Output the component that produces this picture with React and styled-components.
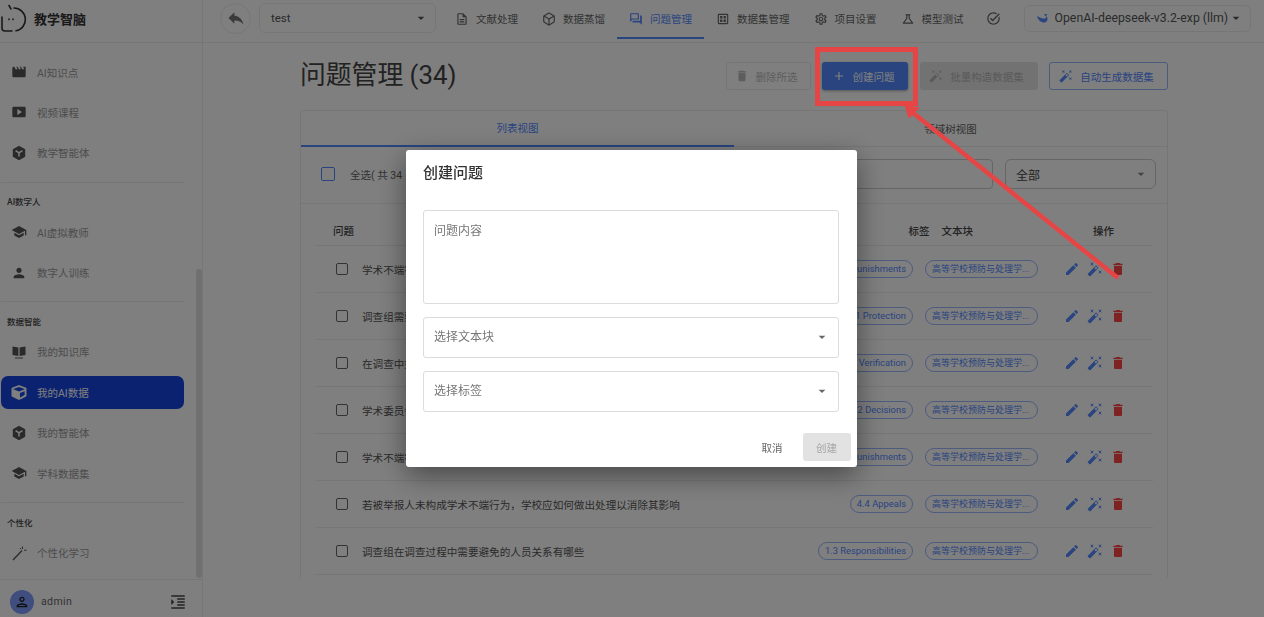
import React from 'react';
import styled, { createGlobalStyle } from 'styled-components';
import {
  MdMovie, MdSmartDisplay, MdSchool, MdPerson, MdEdit, MdDelete, MdAutoFixHigh, MdAdd, MdReply,
  MdArrowDropDown, MdFormatIndentIncrease, MdOutlineDescription, MdOutlineQuestionAnswer,
  MdOutlineDataset, MdOutlineSettings, MdOutlineScience, MdOutlineTaskAlt, MdOutlinePerson,
} from 'react-icons/md';
import { FaCube } from 'react-icons/fa';
import { Box } from 'lucide-react';

const BLUE = '#5288ff';
const LINE = '#ededed';

const GlobalStyle = createGlobalStyle`
  html, body { margin: 0; height: 100%; overflow: hidden; background: #fff; }
  body { font-family: Roboto, "Noto Sans CJK SC", sans-serif; color: #444; }
  * { box-sizing: border-box; }
`;

const Page = styled.div`
  display: flex;
  width: 1264px;
  height: 617px;
`;

/* 侧边栏 */
const Sidebar = styled.aside`
  position: relative;
  display: flex;
  flex-direction: column;
  flex: 0 0 203px;
  border-right: 1px solid ${LINE};
`;
const Brand = styled.div`
  display: flex;
  align-items: center;
  gap: 7px;
  height: 43px;
  padding: 0 0 6px 1px;
  border-bottom: 1px solid ${LINE};
  font-size: 13px;
  font-weight: 700;
  color: #333;
`;
const Menu = styled.nav`
  flex: 1;
  padding: 12.5px 0 0 1px;
  overflow: hidden;
`;
const MenuItem = styled.div`
  display: flex;
  align-items: center;
  gap: 10px;
  width: 183px;
  height: 33px;
  margin-bottom: 7.4px;
  padding-left: 10px;
  border-radius: 7px;
  font-size: 10.5px;
  color: ${(p) => (p.$active ? '#fff' : '#999')};
  background: ${(p) => (p.$active ? '#1644e0' : 'transparent')};
  svg { flex: 0 0 16px; color: ${(p) => (p.$active ? '#fff' : '#555')}; }
`;
const Divider = styled.div`
  width: 183px;
  height: 1px;
  margin-top: 12.4px;
  background: ${LINE};
`;
const SectionLabel = styled.div`
  padding: 12.5px 0 6.5px 6px;
  font-size: 8.5px;
  line-height: 14px;
  font-weight: 500;
  color: #444;
`;
const ScrollThumb = styled.div`
  position: absolute;
  top: 269px;
  right: 0;
  width: 6px;
  height: 309px;
  border-radius: 3px;
  background: #e0e0e0;
`;
const UserBar = styled.div`
  display: flex;
  align-items: center;
  gap: 7px;
  height: 38px;
  padding: 6px 15px 0 10px;
  border-top: 1px solid ${LINE};
  font-size: 10.5px;
  letter-spacing: 0.4px;
  color: #666;
`;
const Avatar = styled.div`
  display: grid;
  place-items: center;
  width: 24px;
  height: 24px;
  border-radius: 50%;
  background: #7f9bff;
  color: #222;
`;
const Collapse = styled(MdFormatIndentIncrease)`
  margin-left: auto;
  color: #444;
`;

/* 顶部栏 */
const Main = styled.main`
  display: flex;
  flex-direction: column;
  flex: 1;
  min-width: 0;
`;
const TopBar = styled.header`
  display: flex;
  align-items: center;
  height: 43px;
  padding: 0 0 6px 17px;
  border-bottom: 1px solid ${LINE};
`;
const BackButton = styled.div`
  display: grid;
  place-items: center;
  flex: 0 0 31px;
  height: 31px;
  margin-right: 8px;
  border: 1px solid ${LINE};
  border-radius: 50%;
  color: #777;
`;
const TopSelect = styled.div`
  display: flex;
  align-items: center;
  justify-content: space-between;
  flex: 0 0 ${(p) => p.$width}px;
  height: ${(p) => p.$height}px;
  padding: 0 6px 0 11px;
  border: 1px solid ${LINE};
  border-radius: 6px;
  font-size: ${(p) => p.$font}px;
  white-space: nowrap;
  color: #555;
`;
const NavTabs = styled.div`
  display: flex;
  flex: 0 0 auto;
  height: 36.5px;
  margin: 6px 0 0 7px;
`;
const NavTab = styled.div`
  display: flex;
  align-items: center;
  gap: 7px;
  height: 100%;
  padding: 0 12px 3px;
  font-size: 10.5px;
  white-space: nowrap;
  color: ${(p) => (p.$active ? BLUE : '#666')};
  border-bottom: 2px solid ${(p) => (p.$active ? BLUE : 'transparent')};
  svg { flex: 0 0 auto; }
`;
const CheckIcon = styled(MdOutlineTaskAlt)`
  flex: 0 0 auto;
  margin: 0 23px 0 10px;
  color: #666;
`;
const ModelName = styled.span`
  display: flex;
  align-items: center;
  gap: 7px;
`;

/* 内容区 */
const Content = styled.div`
  flex: 1;
  padding: 19px 96px 0 97px;
`;
const Heading = styled.div`
  display: flex;
  align-items: center;
  height: 28px;
  margin-bottom: 20px;
`;
const Title = styled.h1`
  flex: 1;
  margin: 0;
  padding-bottom: 2px;
  font-size: 25.8px;
  line-height: 28px;
  font-weight: 400;
  color: #444;
`;
const Actions = styled.div`
  display: flex;
  gap: 11.5px;
`;
const ActionButton = styled.div`
  display: flex;
  align-items: center;
  justify-content: center;
  gap: 7px;
  width: ${(p) => p.$width}px;
  height: 28px;
  padding-right: 4px;
  border-radius: 3px;
  font-size: 10.5px;
  ${(p) => p.$kind === 'contained' && `background: ${BLUE}; color: #fff; box-shadow: 0 1px 3px rgba(0,0,0,.35);`}
  ${(p) => p.$kind === 'disabled' && 'background: #e4e4e4; color: #b4b4b4;'}
  ${(p) => p.$kind === 'ghost' && `border: 1px solid ${LINE}; color: #bbb;`}
  ${(p) => p.$kind === 'outlined' && `border: 1px solid #9ab6ff; color: ${BLUE};`}
`;
const Card = styled.section`
  height: 468px;
  border: 1px solid ${LINE};
  border-bottom: 0;
  border-radius: 3px 3px 0 0;
`;
const Tabs = styled.div`
  display: grid;
  grid-template-columns: 433px 1fr;
  height: 36px;
  border-bottom: 1px solid ${LINE};
`;
const Tab = styled.div`
  display: grid;
  place-items: center;
  padding-bottom: 1px;
  margin-bottom: -1px;
  font-size: 10.5px;
  color: ${(p) => (p.$active ? BLUE : '#666')};
  border-bottom: ${(p) => (p.$active ? `2px solid ${BLUE}` : '0')};
`;
const Filters = styled.div`
  display: flex;
  align-items: center;
  height: 57px;
  padding: 0 11px 2px 20px;
  border-bottom: 1px solid ${LINE};
`;
const CheckBox = styled.span`
  flex: 0 0 auto;
  width: ${(p) => (p.$primary ? 14 : 11.5)}px;
  height: ${(p) => (p.$primary ? 14 : 11.5)}px;
  border: 1.5px solid ${(p) => (p.$primary ? BLUE : '#666')};
  border-radius: 2px;
`;
const SelectAll = styled.span`
  flex: 0 0 56px;
  margin: 0 12px 0 15px;
  font-size: 10.5px;
  color: #666;
  white-space: nowrap;
`;
const SearchBox = styled.div`
  flex: 1;
  height: 30px;
  border: 1px solid #ccc;
  border-radius: 4px;
`;
const FilterSelect = styled.div`
  display: flex;
  align-items: center;
  justify-content: space-between;
  width: 151px;
  height: 30px;
  margin-left: 12px;
  padding: 0 6px 0 10px;
  border: 1px solid #ccc;
  border-radius: 6px;
  font-size: 12px;
  color: #444;
  svg { color: #888; }
`;
const Table = styled.div`
  margin: 0 14px;
`;
const HeadRow = styled.div`
  display: flex;
  align-items: center;
  height: 42px;
  padding: 12px 39px 0 18px;
  border-bottom: 1px solid ${LINE};
  font-size: 10.5px;
  font-weight: 500;
  color: #444;
`;
const HeadQuestion = styled.span`
  flex: 1;
`;
const HeadOps = styled.span`
  margin-left: 120px;
`;
const HeadGap = styled.span`
  margin-left: 12px;
`;
const Row = styled.div`
  display: flex;
  align-items: center;
  height: 47px;
  padding: 0 27px 0 21px;
  border-bottom: 1px solid ${LINE};
`;
const Question = styled.span`
  flex: 1;
  min-width: 0;
  margin-left: 14.5px;
  font-size: 10.6px;
  color: #555;
  white-space: nowrap;
  overflow: hidden;
`;
const Chip = styled.span`
  flex: 0 0 auto;
  height: 18.5px;
  padding: 0 6px;
  border: 1px solid #9ab6ff;
  border-radius: 9.5px;
  font-size: 9.4px;
  line-height: 16.5px;
  color: ${BLUE};
  white-space: nowrap;
  overflow: hidden;
`;
const DocChip = styled(Chip)`
  width: 113px;
  margin-left: 12px;
  font-size: 9px;
`;
const RowIcons = styled.div`
  display: flex;
  gap: 7px;
  margin-left: 26px;
`;
const EditIcon = styled(MdEdit)`color: ${BLUE};`;
const WandIcon = styled(MdAutoFixHigh)`color: ${BLUE};`;
const TrashIcon = styled(MdDelete)`color: #ff4444;`;

/* 弹窗 */
const Backdrop = styled.div`
  position: fixed;
  inset: 0;
  display: flex;
  align-items: flex-start;
  justify-content: center;
  padding: 150px 2px 0 0;
  background: rgba(0, 0, 0, 0.5);
`;
const Dialog = styled.div`
  display: flex;
  flex-direction: column;
  width: 451px;
  height: 317px;
  padding: 0 6px 6px 17.5px;
  border-radius: 3px;
  background: #fff;
  box-shadow: 0 8px 28px rgba(0, 0, 0, 0.45);
`;
const DialogTitle = styled.h2`
  height: 60px;
  margin: 0;
  padding-top: 12px;
  font-size: 15px;
  line-height: 23px;
  font-weight: 500;
  color: #333;
`;
const Field = styled.div`
  display: flex;
  align-items: ${(p) => (p.$multi ? 'flex-start' : 'center')};
  justify-content: space-between;
  width: 416px;
  height: ${(p) => (p.$multi ? 94 : 41.5)}px;
  margin-bottom: 12.5px;
  padding: ${(p) => (p.$multi ? '11px 10px' : '0 8px 0 10px')};
  border: 1px solid #dcdcdc;
  border-radius: 3px;
  font-size: 12px;
  line-height: 18px;
  color: #777;
  svg { color: #666; }
`;
const DialogFooter = styled.div`
  display: flex;
  align-items: center;
  justify-content: flex-end;
  gap: 20px;
  margin-top: auto;
  font-size: 10.5px;
`;
const CancelText = styled.span`
  color: #666;
`;
const SubmitButton = styled.div`
  display: grid;
  place-items: center;
  width: 48px;
  height: 28px;
  border-radius: 3px;
  background: #e2e2e2;
  color: #a6a6a6;
`;
const Annotation = styled.svg`
  position: fixed;
  inset: 0;
  pointer-events: none;
`;

const Logo = () => (
  <svg width="26" height="28" viewBox="0 0 26 28" fill="none" stroke="#333" strokeWidth="1.6" strokeLinecap="round">
    <path d="M8 1.5 L10 5" />
    <path d="M13 4 A11.5 11.5 0 0 1 15 26.8" />
    <path d="M11 27 L4 27 Q1 27 1 24 L1 13" />
    <path d="M8 15v.6M12 15v.6" />
  </svg>
);

const BookIcon = () => (
  <svg width="16" height="16" viewBox="0 0 16 16" fill="currentColor">
    <path d="M1.5 2.5 L7.4 3.5 V12 L1.5 11 Z M8.6 3.5 L14.5 2.5 V11 L8.6 12 Z" />
    <path d="M4 13.5h8v1H4z" />
  </svg>
);

const HexIcon = () => (
  <svg width="16" height="16" viewBox="0 0 16 16">
    <path d="M8 .8 L14.2 4.3 V11.7 L8 15.2 L1.8 11.7 V4.3 Z" fill="currentColor" />
    <path d="M4.6 5.6 L8 7.8 L11.4 5.6 M8 7.8 V11.6" fill="none" stroke="#fff" strokeWidth="1.5" />
  </svg>
);

const WandLine = () => (
  <svg width="16" height="16" viewBox="0 0 16 16" fill="none" stroke="currentColor">
    <path d="M2 15 L11 5.5" strokeWidth="1.3" />
    <path d="M11.5 1.5 V4 M13 5.2 H15.5 M9 3 L10.2 4.2" strokeWidth="1" />
  </svg>
);

const WhaleIcon = () => (
  <svg width="12" height="11" viewBox="0 0 12 11" fill={BLUE}>
    <path d="M1 3 C2 7 5 9.5 8 9.5 C10 9.5 11.5 8 11.5 6 C11.5 4.5 11 3.5 10.5 3 C10.5 5 9 6 7 5.5 C4.5 5 3 4 1 3 Z" />
    <path d="M8 1 L11.5 1.2 L9.5 3.4 Z" />
  </svg>
);

const section1 = [
  ['AI知识点', <MdMovie size={16} />],
  ['视频课程', <MdSmartDisplay size={16} />],
  ['教学智能体', <HexIcon />],
];
const section2 = [
  ['AI虚拟教师', <MdSchool size={16} />],
  ['数字人训练', <MdPerson size={18} />],
];
const section3 = [
  ['我的知识库', <BookIcon />],
  ['我的AI数据', <FaCube size={15} />, true],
  ['我的智能体', <HexIcon />],
  ['学科数据集', <MdSchool size={18} />],
];

const navTabs = [
  ['文献处理', <MdOutlineDescription size={14} />],
  ['数据蒸馏', <Box size={14} />],
  ['问题管理', <MdOutlineQuestionAnswer size={14} />, true],
  ['数据集管理', <MdOutlineDataset size={14} />],
  ['项目设置', <MdOutlineSettings size={14} />],
  ['模型测试', <MdOutlineScience size={14} />],
];

const rows = [
  ['学术不端行为的处理结果有哪些类型', '4.3 Punishments'],
  ['调查组需要对举报人采取哪些保护措施', '3.1 Protection'],
  ['在调查中如何对相关证据进行核实', '3.2 Verification'],
  ['学术委员会如何作出最终认定结论', '4.2 Decisions'],
  ['学术不端行为的处分应当如何执行', '4.3 Punishments'],
  ['若被举报人未构成学术不端行为，学校应如何做出处理以消除其影响', '4.4 Appeals'],
  ['调查组在调查过程中需要避免的人员关系有哪些', '1.3 Responsibilities'],
];

const MenuList = ({ items }) =>
  items.map(([label, icon, active]) => (
    <MenuItem key={label} $active={active}>
      {icon}
      {label}
    </MenuItem>
  ));

const App = () => (
  <Page>
    <GlobalStyle />
    <Sidebar>
      <Brand>
        <Logo />
        教学智脑
      </Brand>
      <Menu>
        <MenuList items={section1} />
        <Divider />
        <SectionLabel>AI数字人</SectionLabel>
        <MenuList items={section2} />
        <Divider />
        <SectionLabel>数据智能</SectionLabel>
        <MenuList items={section3} />
        <Divider />
        <SectionLabel>个性化</SectionLabel>
        <MenuItem>
          <WandLine />
          个性化学习
        </MenuItem>
      </Menu>
      <ScrollThumb />
      <UserBar>
        <Avatar>
          <MdOutlinePerson size={16} />
        </Avatar>
        admin
        <Collapse size={18} />
      </UserBar>
    </Sidebar>

    <Main>
      <TopBar>
        <BackButton>
          <MdReply size={20} />
        </BackButton>
        <TopSelect $width={177} $height={30} $font={11.5}>
          test
          <MdArrowDropDown size={16} />
        </TopSelect>
        <NavTabs>
          {navTabs.map(([label, icon, active]) => (
            <NavTab key={label} $active={active}>
              {icon}
              {label}
            </NavTab>
          ))}
        </NavTabs>
        <CheckIcon size={15} />
        <TopSelect $width={227} $height={27} $font={12.3}>
          <ModelName>
            <WhaleIcon />
            OpenAI-deepseek-v3.2-exp (llm)
          </ModelName>
          <MdArrowDropDown size={16} />
        </TopSelect>
      </TopBar>

      <Content>
        <Heading>
          <Title>问题管理 (34)</Title>
          <Actions>
            <ActionButton $kind="ghost" $width={85}>
              <MdDelete size={14} />
              删除所选
            </ActionButton>
            <ActionButton $kind="contained" $width={86}>
              <MdAdd size={14} />
              创建问题
            </ActionButton>
            <ActionButton $kind="disabled" $width={118}>
              <MdAutoFixHigh size={14} />
              批量构造数据集
            </ActionButton>
            <ActionButton $kind="outlined" $width={119}>
              <MdAutoFixHigh size={14} />
              自动生成数据集
            </ActionButton>
          </Actions>
        </Heading>
        <Card>
          <Tabs>
            <Tab $active>列表视图</Tab>
            <Tab>领域树视图</Tab>
          </Tabs>
          <Filters>
            <CheckBox $primary />
            <SelectAll>全选( 共 34</SelectAll>
            <SearchBox />
            <FilterSelect>
              全部
              <MdArrowDropDown size={16} />
            </FilterSelect>
          </Filters>
          <Table>
            <HeadRow>
              <HeadQuestion>问题</HeadQuestion>
              <span>标签</span>
              <HeadGap>文本块</HeadGap>
              <HeadOps>操作</HeadOps>
            </HeadRow>
            {rows.map(([text, tag]) => (
              <Row key={text + tag}>
                <CheckBox />
                <Question>{text}</Question>
                <Chip>{tag}</Chip>
                <DocChip>高等学校预防与处理学...</DocChip>
                <RowIcons>
                  <EditIcon size={16} />
                  <WandIcon size={16} />
                  <TrashIcon size={16} />
                </RowIcons>
              </Row>
            ))}
          </Table>
        </Card>
      </Content>
    </Main>

    <Backdrop>
      <Dialog>
        <DialogTitle>创建问题</DialogTitle>
        <Field $multi>问题内容</Field>
        <Field>
          选择文本块
          <MdArrowDropDown size={16} />
        </Field>
        <Field>
          选择标签
          <MdArrowDropDown size={16} />
        </Field>
        <DialogFooter>
          <CancelText>取消</CancelText>
          <SubmitButton>创建</SubmitButton>
        </DialogFooter>
      </Dialog>
    </Backdrop>

    <Annotation width="1264" height="617" viewBox="0 0 1264 617" fill="none" stroke="#e64545">
      <rect x="817.5" y="49.5" width="98" height="54" strokeWidth="5" />
      <path d="M1118 278 L912 112" strokeWidth="4.5" />
      <path d="M905 105 L919 108 L909 118 Z" fill="#e64545" strokeWidth="1" />
    </Annotation>
  </Page>
);

export default App;
